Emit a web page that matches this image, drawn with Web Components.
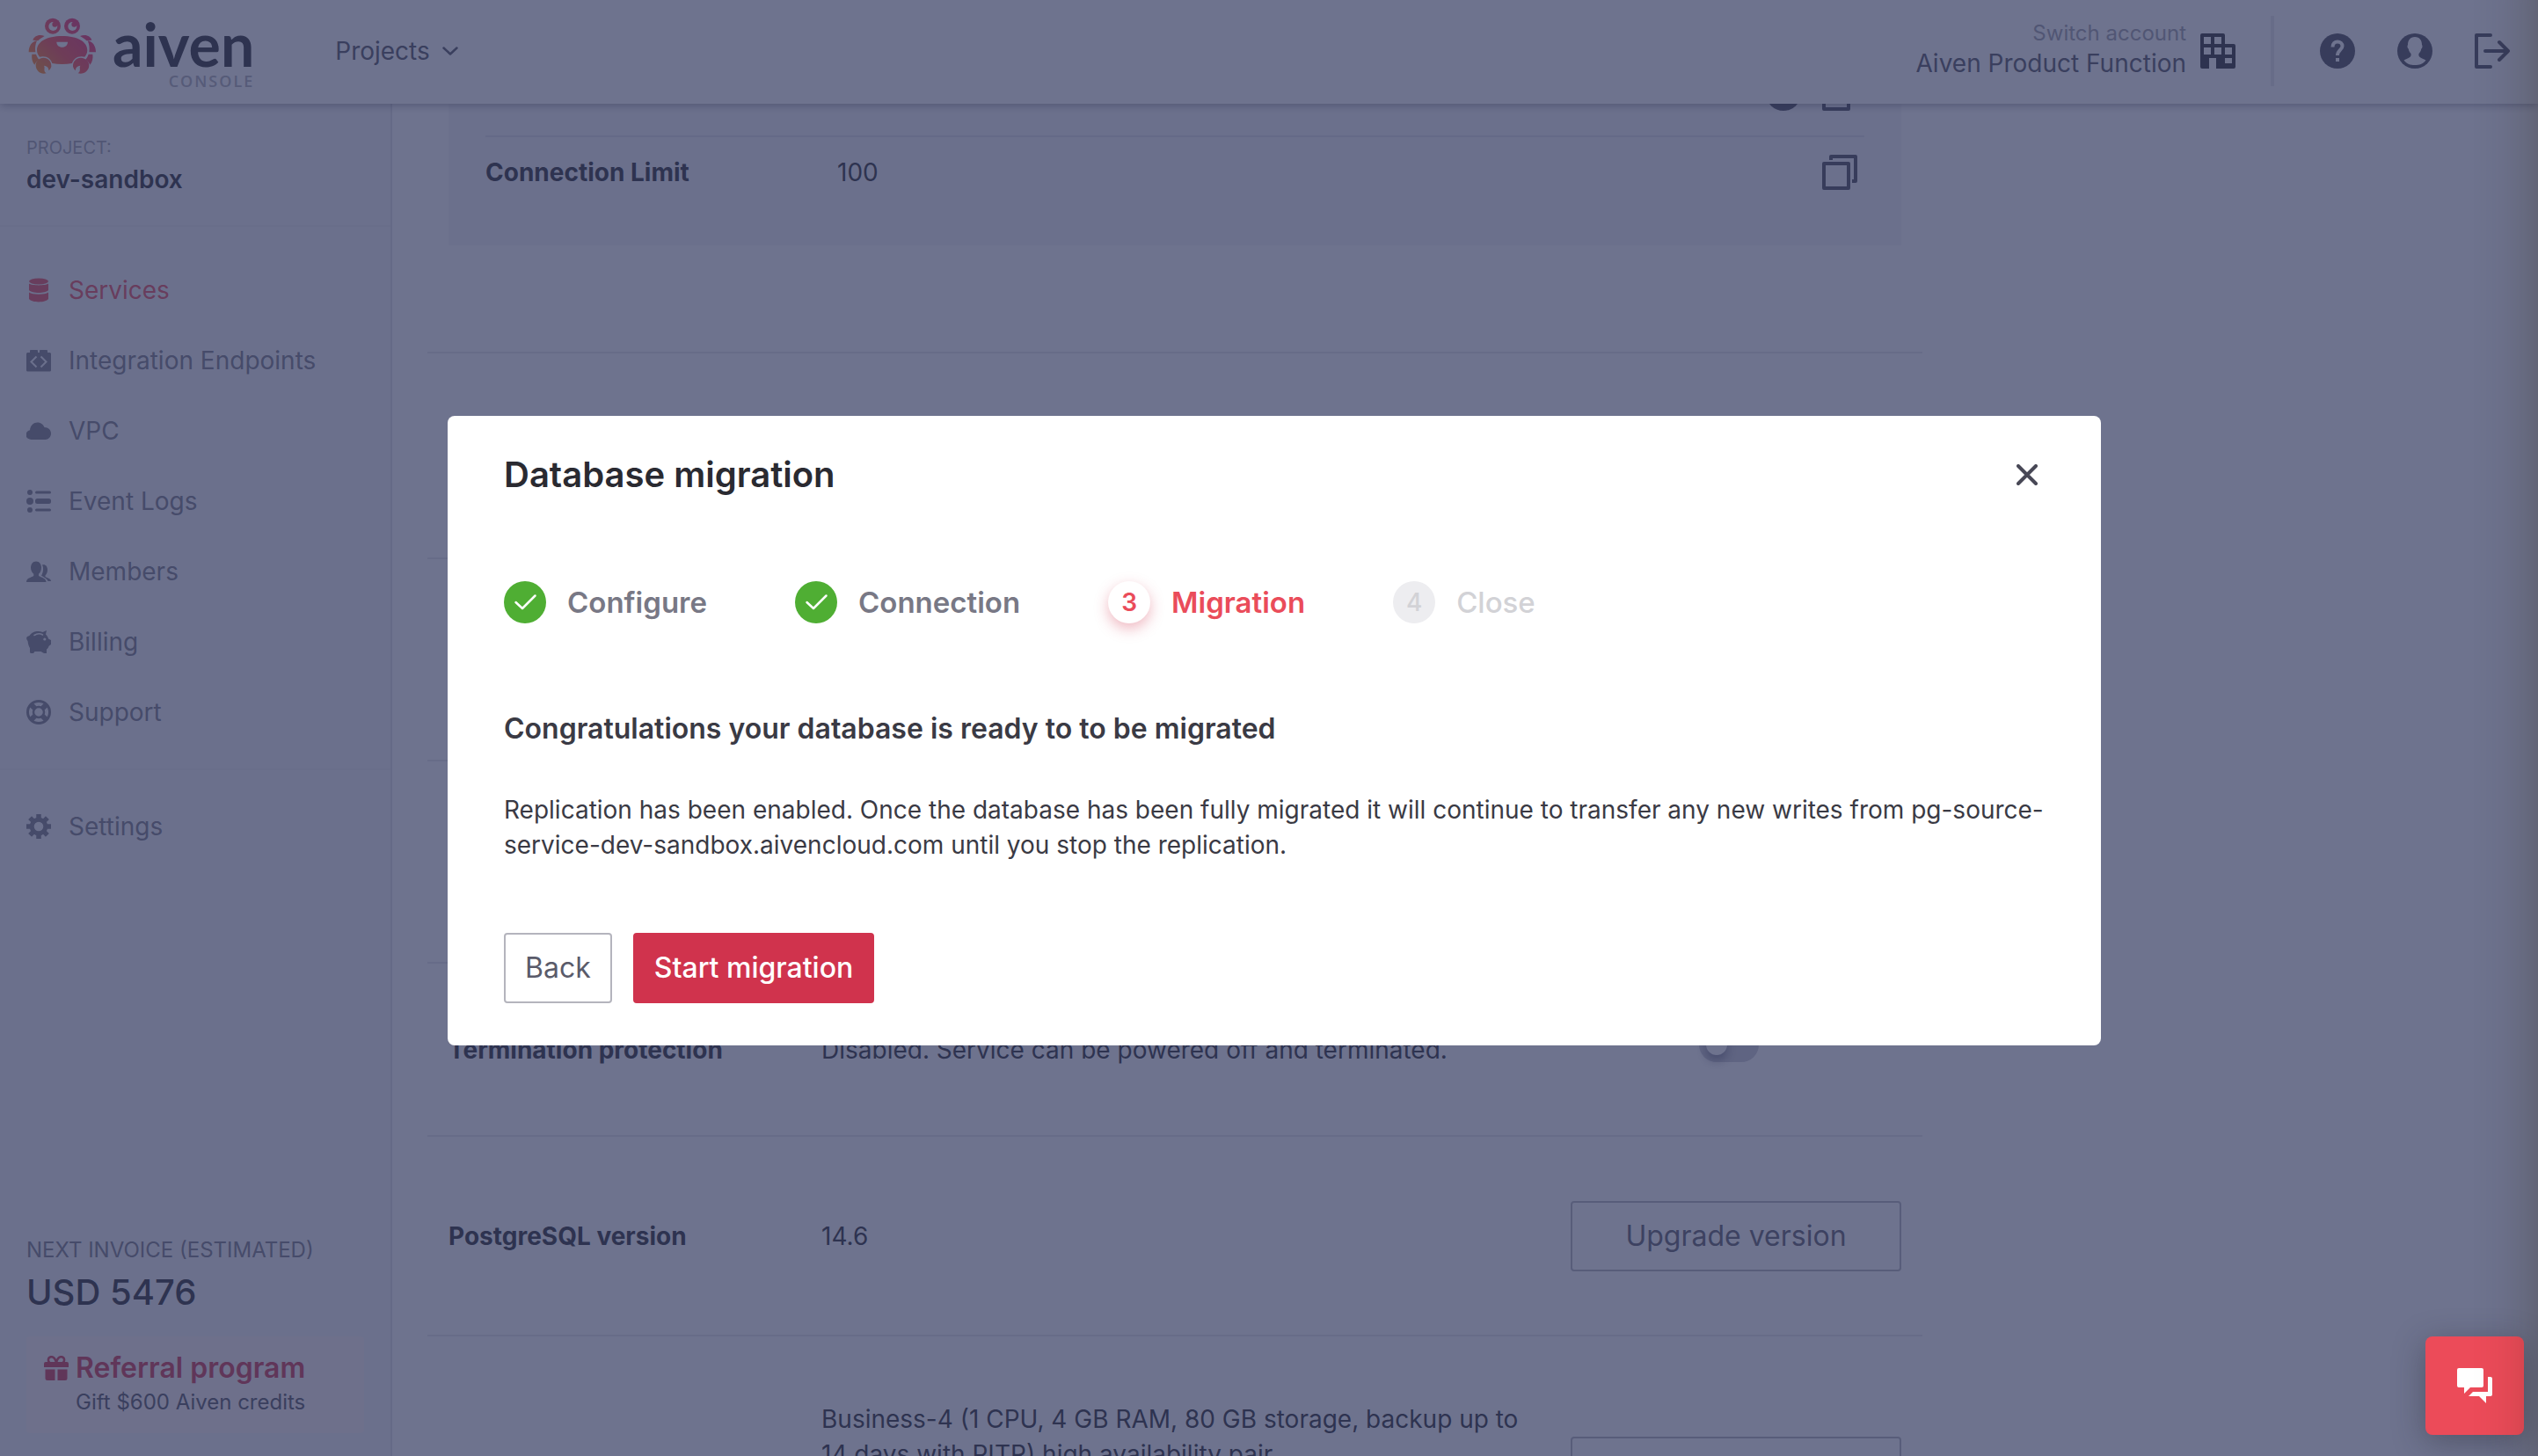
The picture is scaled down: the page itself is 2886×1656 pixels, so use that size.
<!DOCTYPE html>
<html lang="en">
<head>
<meta charset="utf-8">
<title>Aiven Console</title>
<style>
  html, body { margin: 0; height: 100%; }
  body {
    font: 28px/40px Inter, "Liberation Sans", sans-serif;
    color: #2a2a31;
    background: #fff;
    overflow: hidden;
    --line: #e7e7ea;
    --panel: #f6f6f8;
    --muted: #787885;
    --text: #50505e;
    --red: #ea4c5a;
    --red-dark: #d0334d;
    --border: #b4b4bd;
  }
</style>
</head>
<body>
<console-app>
  <console-header slot="header">
    <console-logo slot="brand"></console-logo>
    <span slot="menu">Projects</span>
    <span slot="caption">Switch account</span>
    <span slot="account">Aiven Product Function</span>
  </console-header>

  <side-nav slot="nav">
    <span slot="project-label">PROJECT:</span>
    <span slot="project">dev-sandbox</span>
    <nav-item icon="services" active>Services</nav-item>
    <nav-item icon="integration">Integration Endpoints</nav-item>
    <nav-item icon="cloud">VPC</nav-item>
    <nav-item icon="list">Event Logs</nav-item>
    <nav-item icon="members">Members</nav-item>
    <nav-item icon="piggy">Billing</nav-item>
    <nav-item icon="support">Support</nav-item>
    <nav-item icon="gear" slot="secondary">Settings</nav-item>
    <invoice-summary slot="footer">
      <span slot="label">NEXT INVOICE (ESTIMATED)</span>
      <span slot="amount">USD 5476</span>
    </invoice-summary>
    <referral-link slot="footer">
      <span slot="title">Referral program</span>
      <span slot="detail">Gift $600 Aiven credits</span>
    </referral-link>
  </side-nav>

  <connection-card>
    <info-row icons="dot copy"></info-row>
    <info-row icons="copy"><span slot="label">Connection Limit</span>100</info-row>
  </connection-card>
  <setting-row size="large"></setting-row>
  <setting-row></setting-row>
  <setting-row></setting-row>
  <setting-row size="small">
    <span slot="label">Termination protection</span>
    Disabled. Service can be powered off and terminated.
    <toggle-switch slot="action" label="Termination protection"></toggle-switch>
  </setting-row>
  <setting-row size="medium">
    <span slot="label">PostgreSQL version</span>
    14.6
    <ui-button slot="action" wide>Upgrade version</ui-button>
  </setting-row>
  <setting-row size="tall">
    Business-4 (1 CPU, 4 GB RAM, 80 GB storage, backup up to 14 days with PITR) high availability pair
    <ui-button slot="action" wide label="Change plan"></ui-button>
  </setting-row>
</console-app>

<modal-dialog>
  <span slot="title">Database migration</span>
  <step-list slot="steps">
    <step-item state="done">Configure</step-item>
    <step-item state="done">Connection</step-item>
    <step-item state="current" number="3">Migration</step-item>
    <step-item state="pending" number="4">Close</step-item>
  </step-list>
  <span slot="heading">Congratulations your database is ready to to be migrated</span>
  Replication has been enabled. Once the database has been fully migrated it will continue to transfer any new writes from pg-source-service-dev-sandbox.aivencloud.com until you stop the replication.
  <ui-button slot="actions">Back</ui-button>
  <ui-button slot="actions" primary>Start migration</ui-button>
</modal-dialog>

<chat-launcher></chat-launcher>
<drawer-edge></drawer-edge>

<script>
const define = (name, render) => customElements.define(name, class extends HTMLElement {
  constructor() {
    super();
    this.attachShadow({ mode: 'open' });
  }
  connectedCallback() {
    this.shadowRoot.innerHTML = render(this);
  }
});

const ICONS = {
  building: ['0 0 40 40', '<path fill="currentColor" fill-rule="evenodd" d="M2 0H26a2 2 0 0 1 2 2V12H38a2 2 0 0 1 2 2V38a2 2 0 0 1-2 2H18V28H10V40H2a2 2 0 0 1-2-2V2A2 2 0 0 1 2 0ZM4 4V12H12V4ZM16 4V12H24V4ZM4 16V24H12V16ZM16 16V24H24V16ZM28 16V24H36V16ZM28 28V34H36V28Z"/>'],
  help: ['0 0 40 40', '<circle cx="20" cy="20" r="20" fill="currentColor"/><path d="M14.500 15.500C14.500 11.500 17 9.500 20 9.500S25.500 11.500 25.500 14.500C25.500 18.500 20 19 20 25" fill="none" stroke="#fff" stroke-width="4"/><path d="M18 28h4v4h-4z" fill="#fff"/>'],
  user: ['0 0 40 40', '<circle cx="20" cy="20" r="20" fill="currentColor"/><path fill="#fff" d="M20 4C14.500 4 12 8 12 13C11 14 11.500 17 12.700 17.500C13 20 14.500 22 15.500 23C16.500 27 13 28 7.500 30.500C11 35 15 36 20 36S29 35 32.500 30.500C27 28 23.500 27 24.500 23C25.500 22 27 20 27.300 17.500C28.500 17 29 14 28 13C28 8 25.500 4 20 4Z"/>'],
  logout: ['0 0 40 40', '<g fill="none" stroke="currentColor" stroke-width="4" stroke-linecap="round" stroke-linejoin="round"><path d="M18 2H2V38H18M12 20H38M28 10L38 20L28 30"/></g>'],
  copy: ['0 0 40 40', '<g fill="none" stroke="currentColor" stroke-width="4" stroke-linejoin="round"><path d="M2 10H30V38H2Z"/><path d="M10 6V2H38V30H34"/></g>'],
  dot: ['0 0 40 40', '<circle cx="20" cy="20" r="20" fill="currentColor"/>'],
  chevron: ['0 0 18 10', '<path d="M1.500 1.500L9 8.500L16.500 1.500" fill="none" stroke="currentColor" stroke-width="2.500" stroke-linecap="round" stroke-linejoin="round"/>'],
  services: ['0 0 28 28', '<g fill="currentColor"><ellipse cx="14" cy="4" rx="11" ry="3.500"/><path d="M3 6.500C6 9 22 9 25 6.500V14C22 18 6 18 3 14Z"/><path d="M3 16.500C7 19.500 21 19.500 25 16.500V24C22 28.500 6 28.500 3 24Z"/></g>'],
  integration: ['0 0 28 28', '<path fill="currentColor" d="M1.500 5H4V3A1 1 0 0 1 5 2H12A1 1 0 0 1 13 3V5H15V3A1 1 0 0 1 16 2H23A1 1 0 0 1 24 3V5H26.500A1.500 1.500 0 0 1 28 6.500V25A1.500 1.500 0 0 1 26.500 26.500H1.500A1.500 1.500 0 0 1 0 25V6.500A1.500 1.500 0 0 1 1.500 5Z"/><path fill="none" stroke="#f6f6f8" stroke-width="2" d="M11.500 9.500L5.500 15.500L11.500 21.500M16.500 9.500L22.500 15.500L16.500 21.500"/>'],
  cloud: ['0 0 28 28', '<path fill="currentColor" d="M6 24A6 5.500 0 0 1 4 13.200C4.500 7.500 8.500 4.500 12.500 4.500C16.500 4.500 19.500 7 20.500 10C25 10 28 13 28 17C28 21 25 24 21.500 24Z"/>'],
  list: ['0 0 28 28', '<g fill="currentColor"><circle cx="4" cy="4" r="3"/><circle cx="4" cy="14" r="4"/><circle cx="4" cy="24" r="3"/><rect x="10" y="2.500" width="18" height="3" rx="1.500"/><rect x="10" y="11" width="18" height="6" rx="2.500"/><rect x="10" y="22.500" width="18" height="3" rx="1.500"/></g>'],
  members: ['0 0 28 28', '<g fill="currentColor"><path d="M11 2.500C7 2.500 5 6 5 9.500C5 13 6.500 15 8.300 16.800V19C5 21 0 21.500 0 26H22.500C22.500 22 18 21 14 19V16.800C15.800 15 17 13 17 9.500C17 6 15 2.500 11 2.500Z"/><path d="M18 6.500C21.500 5.500 24 8 24 12C24 15 23 17 21.500 18.500V20C24 21.500 28 22 28 25H24.500C23.500 22 19 20 17 18.800C19 15.500 20 10 18 6.500Z"/></g>'],
  piggy: ['0 0 28 28', '<path fill="currentColor" d="M1 8C0 9 0 10.500 .500 11.500L1.500 13C2 17 3 19.500 4 21V25.500A1.500 1.500 0 0 0 5.500 27H8L9.500 25H16.500L20 27H23V22.500C24.500 21.500 25.200 20 25.800 18.500L28 17V12L25 10.500C24.500 8 23 6.500 22 5.500L23 1L18.500 3C14 1.200 7 1.500 3.500 7Z"/><path fill="none" stroke="#f6f6f8" stroke-width="1.600" stroke-linecap="round" d="M9 6.500C12 4.500 16 4.500 18.500 6"/><circle cx="20.800" cy="11" r="1.600" fill="#f6f6f8"/>'],
  support: ['0 0 28 28', '<g fill="none" stroke="currentColor"><circle cx="14" cy="14" r="12.500" stroke-width="3"/><circle cx="14" cy="14" r="6" stroke-width="2.500"/><path stroke-width="6" d="M4.800 4.800L9.500 9.500M23.200 4.800L18.500 9.500M4.800 23.200L9.500 18.500M23.200 23.200L18.500 18.500"/></g>'],
  gear: ['0 0 28 28', '<g fill="none" stroke="currentColor"><circle cx="14" cy="14" r="7.800" stroke-width="5"/><path stroke-width="5.500" d="M14 0V5M14 23V28M0 14H5M23 14H28M4.100 4.100L7.600 7.600M20.400 20.400L23.900 23.900M4.100 23.900L7.600 20.400M20.400 7.600L23.900 4.100"/></g>'],
  gift: ['0 0 28 28', '<g fill="currentColor"><path d="M2 7H26A2 2 0 0 1 28 9V13H0V9A2 2 0 0 1 2 7ZM1.500 15.500H12.500V28H4A2.500 2.500 0 0 1 1.500 25.500ZM15.500 15.500H26.500V25.500A2.500 2.500 0 0 1 24 28H15.500Z"/></g><g fill="none" stroke="currentColor" stroke-width="2.500"><path d="M14 8C13 3.500 10.500 1 8 1.200C4.500 1.500 4 6 6.500 8M14 8C15 3.500 17.500 1 20 1.200C23.500 1.500 24 6 21.500 8"/></g>'],
  close: ['0 0 24 24', '<path d="M2 2L22 22M22 2L2 22" fill="none" stroke="currentColor" stroke-width="4" stroke-linecap="round"/>'],
  check: ['0 0 48 48', '<path d="M13.500 24L21 31L35.500 16.500" fill="none" stroke="currentColor" stroke-width="2.500" stroke-linecap="round" stroke-linejoin="round"/>'],
  chat: ['0 0 40 40', '<g fill="currentColor"><path d="M2 0H28A2 2 0 0 1 30 2V20A2 2 0 0 1 28 22H15L8 29V22H2A2 2 0 0 1 0 20V2A2 2 0 0 1 2 0Z"/><path d="M35 10H38A2 2 0 0 1 40 12V30A2 2 0 0 1 38 32H33V40L25 32H13L18 27H35Z"/></g>']
};

define('app-icon', el => {
  const [box, body] = ICONS[el.getAttribute('name')];
  const [, , w, h] = box.split(' ');
  return `<style>
    :host { display: block; flex: none; width: ${w}px; height: ${h}px; }
    svg { display: block; }
  </style>
  <svg viewBox="${box}" width="${w}" height="${h}" aria-hidden="true">${body}</svg>`;
});

define('console-app', () => `<style>
    :host { display: flex; flex-direction: column; height: 100vh; }
    .body { display: flex; flex: 1; min-height: 0; }
    main { flex: 1; min-width: 0; padding: 0 40px; overflow: hidden; }
    .column { max-width: 1700px; }
  </style>
  <slot name="header"></slot>
  <div class="body">
    <slot name="nav"></slot>
    <main><div class="column"><slot></slot></div></main>
  </div>`);

define('console-logo', () => `<style>
    :host { display: block; }
    a { display: flex; gap: 18px; color: #2a2a31; text-decoration: none; }
    svg { display: block; flex: none; margin-top: 20px; }
    .words { display: flex; flex-direction: column; align-items: flex-end; margin-top: 18px; }
    .name { font: 700 68px/64px Lato, "Open Sans", sans-serif; }
    .sub { font: 600 18px/20px "Open Sans", "Noto Sans", sans-serif; letter-spacing: 2px; color: #adadb6; }
  </style>
  <a href="#" aria-label="Aiven console home">
    <svg width="78" height="66" viewBox="36 30 234 198" aria-hidden="true">
      <defs><linearGradient id="shell" gradientUnits="userSpaceOnUse" x1="60" y1="210" x2="210" y2="60">
        <stop offset="0" stop-color="#ff8b1f"/><stop offset=".5" stop-color="#ff4a4a"/><stop offset="1" stop-color="#f0306a"/>
      </linearGradient></defs>
      <g fill="url(#shell)">
        <path d="M52 107C56 92 74 85 92 93C82 99 74 104 70 109Z"/>
        <path d="M38 148C38 128 48 112 66 109C60 122 59 136 61 148Z"/>
        <path d="M49 155L63 155C66 163 70 170 74 174C66 178 61 184 58 191C50 182 47 168 49 155Z"/>
        <path d="M253 107C249 92 231 85 213 93C223 99 231 104 235 109Z"/>
        <path d="M267 148C267 128 257 112 239 109C245 122 246 136 244 148Z"/>
        <path d="M256 155L242 155C239 163 235 170 231 174C239 178 244 184 247 191C255 182 258 168 256 155Z"/>
        <path d="M152 93C205 93 238 113 238 141C238 151 234 158 229 164C207 158 190 170 186 186C165 190 139 190 118 186C114 170 97 158 75 164C70 158 66 151 66 141C66 113 99 93 152 93Z"/>
        <path d="M88 167C105 167 116 180 115 197C113 204 110 208 106 211C107 203 102 195 90 194C95 202 86 211 98 220C80 226 62 212 62 193C62 178 74 167 88 167Z"/>
        <path d="M216 167C199 167 188 180 189 197C191 204 194 208 198 211C197 203 202 195 214 194C209 202 218 211 206 220C224 226 244 212 244 193C244 178 230 167 216 167Z"/>
        <circle cx="120" cy="59" r="27"/><circle cx="186" cy="59" r="27"/>
      </g>
      <g fill="#fff"><circle cx="121" cy="60" r="15"/><circle cx="187" cy="60" r="15"/>
        <path d="M133 113H171C171 124 163 131 152 131S133 124 133 113Z"/></g>
      <g fill="url(#shell)"><circle cx="127" cy="53" r="9"/><circle cx="193" cy="53" r="9"/></g>
    </svg>
    <span class="words"><span class="name">aiven</span><span class="sub">CONSOLE</span></span>
  </a>`);

define('console-header', () => `<style>
    :host { display: block; position: relative; z-index: 1; flex: none; }
    header { display: flex; align-items: center; gap: 92px; height: 118px; box-sizing: border-box; padding: 0 32px 2px; background: #fff; box-shadow: 0 1px 10px rgba(20, 20, 40, .45); color: var(--text); }
    slot[name=brand] { display: block; align-self: flex-start; }
    button { display: flex; align-items: center; border: 0; padding: 0; background: none; font: inherit; color: inherit; text-align: right; }
    .menu { gap: 14px; }
    .right { display: flex; align-items: center; gap: 40px; margin-left: auto; }
    .switch { gap: 16px; }
    .lines { display: flex; flex-direction: column; padding-bottom: 6px; line-height: 35px; }
    .caption { font-size: 24px; color: #9d9da8; }
    .switch app-icon { color: #2a2a31; }
    .rule { width: 4px; height: 80px; background: var(--line); }
    .tools { display: flex; gap: 48px; padding-left: 12px; }
    .tools a { color: #484856; }
  </style>
  <header>
    <slot name="brand"></slot>
    <button class="menu" type="button"><slot name="menu"></slot><app-icon name="chevron"></app-icon></button>
    <div class="right">
      <button class="switch" type="button">
        <span class="lines"><span class="caption"><slot name="caption"></slot></span><slot name="account"></slot></span>
        <app-icon name="building"></app-icon>
      </button>
      <div class="rule"></div>
      <div class="tools">
        <a href="#" aria-label="Help"><app-icon name="help"></app-icon></a>
        <a href="#" aria-label="Profile"><app-icon name="user"></app-icon></a>
        <a href="#" aria-label="Log out"><app-icon name="logout"></app-icon></a>
      </div>
    </div>
  </header>`);

define('side-nav', () => `<style>
    :host { display: flex; flex-direction: column; flex: none; width: 444px; background: var(--panel); border-right: 2px solid #e1e1e6; }
    .project { padding: 34px 30px 32px; border-bottom: 2px solid #efeff2; }
    .project div:first-child { font-size: 20px; line-height: 32px; color: #9d9da8; }
    .project div:last-child { font-weight: 600; }
    nav { padding-top: 32px; }
    .secondary { margin-top: 24px; padding-top: 24px; border-top: 2px solid #efeff2; }
    .footer { margin-top: auto; padding: 0 30px 26px; }
  </style>
  <div class="project"><div><slot name="project-label"></slot></div><div><slot name="project"></slot></div></div>
  <nav><slot></slot><div class="secondary"><slot name="secondary"></slot></div></nav>
  <div class="footer"><slot name="footer"></slot></div>`);

define('nav-item', el => `<style>
    :host { display: block; color: var(--muted); }
    :host([active]) { color: var(--red); }
    a { display: flex; align-items: center; gap: 20px; height: 80px; padding: 0 30px; color: inherit; text-decoration: none; }
  </style>
  <a href="#"><app-icon name="${el.getAttribute('icon')}"></app-icon><slot></slot></a>`);

define('invoice-summary', () => `<style>
    :host { display: block; margin-bottom: 22px; }
    .label { font-size: 24px; line-height: 40px; color: var(--muted); }
    .amount { font-size: 40px; line-height: 56px; font-weight: 500; }
  </style>
  <div class="label"><slot name="label"></slot></div><div class="amount"><slot name="amount"></slot></div>`);

define('referral-link', () => `<style>
    :host { display: block; }
    a { display: flex; gap: 8px; padding: 16px 20px; background: #fdf3f5; border-radius: 4px; text-decoration: none; color: var(--text); }
    app-icon { color: var(--red-dark); margin-top: 6px; }
    .title { font-size: 32px; line-height: 40px; font-weight: 600; color: var(--red-dark); }
    .detail { font-size: 24px; line-height: 38px; }
  </style>
  <a href="#"><app-icon name="gift"></app-icon><span><div class="title"><slot name="title"></slot></div><div class="detail"><slot name="detail"></slot></div></span></a>`);

define('connection-card', () => `<style>
    :host { display: block; margin: -52px 24px 121px; padding: 0 42px 35px; background: var(--panel); }
    ::slotted(info-row:last-child) { border-bottom: 0; }
  </style><slot></slot>`);

define('info-row', el => `<style>
    :host { display: flex; align-items: center; border-bottom: 2px solid #e1e1e6; padding: 20px 8px 28px 0; height: 40px; }
    .label { width: 400px; font-weight: 700; }
    .value { flex: 1; }
    .icons { display: flex; gap: 24px; color: #484856; }
    button { border: 0; padding: 0; background: none; color: inherit; }
  </style>
  <div class="label"><slot name="label"></slot></div><div class="value"><slot></slot></div>
  <div class="icons">${el.getAttribute('icons').split(' ').map(n => `<button type="button" aria-label="${n === 'copy' ? 'Copy value' : 'More information'}"><app-icon name="${n}"></app-icon></button>`).join('')}</div>`);

define('setting-row', () => `<style>
    :host { display: grid; grid-template-columns: 392px 1fr 376px; align-items: center; gap: 32px; box-sizing: border-box; min-height: 230px; padding: 0 24px; border-top: 2px solid var(--line); }
    :host([size=large]) { min-height: 234px; }
    :host([size=small]) { min-height: 197px; }
    :host([size=medium]) { min-height: 227px; }
    :host([size=tall]) { min-height: 310px; }
    :host([size=tall]) .value { min-height: 160px; }
    .label { font-weight: 700; }
    .action { display: flex; justify-content: center; }
  </style>
  <div class="label"><slot name="label"></slot></div><div class="value"><slot></slot></div><div class="action"><slot name="action"></slot></div>`);

define('toggle-switch', el => `<style>
    :host { display: block; margin: 0 16px 12px 0; }
    label { display: block; }
    input { appearance: none; display: flex; align-items: center; box-sizing: border-box; width: 68px; height: 40px; margin: 0; padding: 0 8px; border-radius: 20px; background: #cdcdd6; }
    input::before { content: ""; width: 24px; height: 24px; border-radius: 50%; background: #fff; box-shadow: 0 6px 12px rgba(40, 40, 70, .5); }
  </style>
  <label><input type="checkbox" role="switch" aria-label="${el.getAttribute('label')}"></label>`);

define('ui-button', el => `<style>
    :host { display: block; }
    :host([wide]) { flex: 1; }
    button { display: block; box-sizing: border-box; width: 100%; height: 80px; padding: 0 22px; border: 2px solid var(--border); border-radius: 4px; background: #fff; color: #5a5b6a; font: inherit; font-size: 32px; }
    :host([primary]) button { border-color: var(--red-dark); background: var(--red-dark); color: #fff; font-weight: 500; }
  </style>
  <button type="button"${el.hasAttribute('label') ? ` aria-label="${el.getAttribute('label')}"` : ''}><slot></slot></button>`);

define('modal-dialog', () => `<style>
    :host { display: flex; align-items: center; justify-content: center; position: fixed; inset: 0; z-index: 2; padding: 6px 0 0 12px; background: rgba(49, 55, 94, .7); }
    section { box-sizing: border-box; width: 1880px; max-width: 90%; padding: 40px 64px 48px; border-radius: 8px; background: #fff; }
    header { display: flex; align-items: center; justify-content: space-between; margin-bottom: 94px; }
    h2 { margin: 0; font-size: 40px; line-height: 54px; font-weight: 600; }
    header button { border: 0; padding: 8px; background: none; color: #484856; }
    h3 { margin: 96px 0 48px; font-size: 32px; line-height: 48px; font-weight: 600; color: #3a3a44; }
    p { margin: 0 0 80px; color: #3a3a44; }
    footer { display: flex; gap: 24px; }
  </style>
  <section role="dialog" aria-modal="true" aria-labelledby="title">
    <header><h2 id="title"><slot name="title"></slot></h2><button type="button" aria-label="Close dialog"><app-icon name="close"></app-icon></button></header>
    <slot name="steps"></slot>
    <h3><slot name="heading"></slot></h3>
    <p><slot></slot></p>
    <footer><slot name="actions"></slot></footer>
  </section>`);

define('step-list', () => `<style>
    :host { display: flex; gap: 100px; }
  </style><slot></slot>`);

define('step-item', el => `<style>
    :host { display: flex; align-items: center; gap: 24px; height: 48px; font-size: 33px; font-weight: 600; color: var(--muted); }
    :host([state=current]) { color: var(--red); }
    :host([state=pending]) { color: #d2d2d6; font-weight: 500; }
    .mark { display: grid; place-items: center; width: 48px; height: 48px; border-radius: 50%; font-size: 28px; }
    :host([state=done]) .mark { background: #4fae33; color: #fff; }
    :host([state=current]) .mark { box-shadow: 0 6px 16px rgba(208, 51, 77, .35); }
    :host([state=pending]) .mark { background: #ededf0; }
  </style>
  <span class="mark">${el.getAttribute('number') || '<app-icon name="check"></app-icon>'}</span><slot></slot>`);

define('chat-launcher', () => `<style>
    :host { display: block; position: fixed; right: 16px; bottom: 24px; z-index: 3; }
    button { display: grid; place-items: center; width: 112px; height: 112px; padding: 0; border: 0; border-radius: 8px; background: #ec4b59; color: #fff; box-shadow: 0 8px 36px rgba(40, 40, 50, .4); }
  </style>
  <button type="button" aria-label="Open chat"><app-icon name="chat"></app-icon></button>`);

/* Closed drawer parked past the right edge; only its shadow shows. */
define('drawer-edge', () => `<style>
    :host { display: block; position: fixed; top: -60px; bottom: -60px; left: 100%; width: 200px; z-index: 4; box-shadow: 0 0 64px rgba(40, 30, 0, .32); pointer-events: none; }
  </style>`);
</script>
</body>
</html>
